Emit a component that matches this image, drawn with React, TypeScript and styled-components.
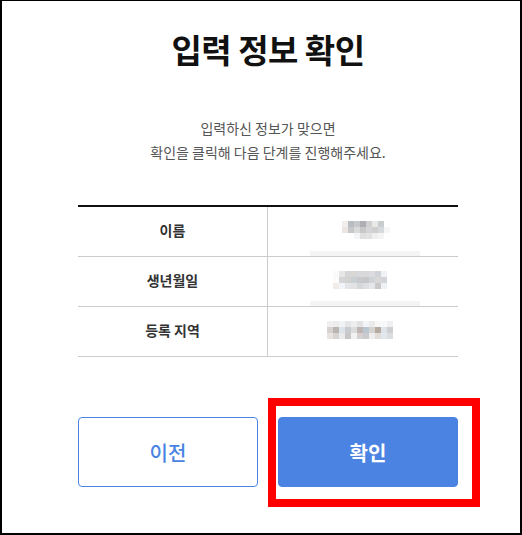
import { FunctionComponent } from "react";
import styled, { createGlobalStyle } from "styled-components";

const GlobalStyle = createGlobalStyle`
    html, body {
        margin: 0;
        padding: 0;
        background: #fff;
    }
    body {
        font-family: "Noto Sans CJK KR", "Noto Sans", sans-serif;
    }
`;

const Frame = styled.main`
    position: relative;
    box-sizing: border-box;
    width: 522px;
    height: 535px;
    padding-left: 14px;
    border: 2px solid #000;
    border-top-width: 1px;
    display: flex;
    flex-direction: column;
    align-items: center;
    background: #fff;
`;

const Title = styled.h1`
    margin: 25px 0 0;
    font-size: 33px;
    line-height: 46px;
    font-weight: 700;
    color: #111;
    letter-spacing: -0.5px;
`;

const Guide = styled.p`
    margin: 44px 0 0;
    font-size: 14px;
    line-height: 24px;
    color: #555;
    text-align: center;
`;

const Table = styled.div`
    margin-top: 41px;
    width: 380px;
    border-top: 2px solid #111;
`;

const Row = styled.div`
    display: grid;
    grid-template-columns: 190px 190px;
    height: 50px;
    border-bottom: 1px solid #ccc;
    box-sizing: border-box;
`;

const Label = styled.div`
    display: flex;
    align-items: center;
    justify-content: center;
    padding-bottom: 3px;
    font-size: 14px;
    font-weight: 700;
    color: #333;
    border-right: 1px solid #ccc;
`;

const Value = styled.div<{ $shade: boolean }>`
    position: relative;
    display: flex;
    align-items: center;
    justify-content: center;
    padding-bottom: 4px;

    &::after {
        content: "";
        display: ${(p) => (p.$shade ? "block" : "none")};
        position: absolute;
        left: 42px;
        right: 38px;
        bottom: 0;
        height: 5px;
        background: #f4f4f4;
    }
`;

const Mosaic = styled.div<{ $cols: number }>`
    display: grid;
    grid-template-columns: repeat(${(p) => p.$cols}, 6px);
    grid-auto-rows: 6px;
`;

const Cell = styled.span<{ $c: string }>`
    background: ${(p) => p.$c};
`;

const Buttons = styled.div`
    margin-top: 60px;
    display: flex;
    gap: 20px;
`;

const Button = styled.button<{ $primary?: boolean }>`
    width: 180px;
    height: 70px;
    box-sizing: border-box;
    border-radius: 4px;
    border: 1px solid #4a83e2;
    background: ${(p) => (p.$primary ? "#4a83e2" : "#fff")};
    color: ${(p) => (p.$primary ? "#fff" : "#4a83e2")};
    font-family: "Noto Sans CJK KR", "Noto Sans", sans-serif;
    font-size: 20px;
    font-weight: ${(p) => (p.$primary ? 700 : 500)};
    cursor: pointer;
`;

const Highlight = styled.div`
    position: absolute;
    left: 266px;
    top: 397px;
    width: 212px;
    height: 109px;
    box-sizing: border-box;
    border: 8px solid #ff0000;
    pointer-events: none;
`;

const mosaics: string[][] = [
    [
        "#fff", "#f1efee", "#b9bcc0", "#c6c8cb", "#aeaeb3", "#d0d0d0", "#e9e9e6", "#c8cdd0", "#fff",
        "#fff", "#ebe6e3", "#c5c7c9", "#dadada", "#c8c8c8", "#d5d5d8", "#cfcfcf", "#d7dadc", "#f6f6f6",
        "#fff", "#fff", "#fff", "#f3f5f6", "#e0dfe0", "#e2e2e3", "#efefef", "#f4f4f4", "#fff",
    ],
    [
        "#fafafa", "#e6e6e6", "#d6d6d8", "#d9d7d4", "#d8d8db", "#d8d8da", "#dcdcdf", "#cfd2d7", "#f0f2f5", "#fff",
        "#fbfbfb", "#d5d5d7", "#d2d2d0", "#c9d0d3", "#c8c9cc", "#c5c7c9", "#cfd2d6", "#d9d8d7", "#d3d3da", "#fff",
        "#f2ece9", "#f1f4f8", "#e4e5e7", "#e2e2e2", "#d6d7da", "#dfdfe1", "#e6e7ea", "#c9c9c9", "#eef1f6", "#fff",
    ],
    [
        "#f0eeee", "#ececec", "#f0f3f5", "#e6e6e6", "#eeeeee", "#e3e3e6", "#f2f5f8", "#ebebeb", "#f7f7f7", "#f6f8fa", "#f0f0f0", "#fff",
        "#d7d2cf", "#bbb5b1", "#dde3ea", "#c9cccf", "#dcdcdc", "#bfb6b3", "#bac7d0", "#d6d3d0", "#b6aba3", "#dfe3ea", "#cfcfd2", "#fff",
        "#e8e3e0", "#d4d4d4", "#ebebeb", "#c7c7c7", "#f2f2f2", "#d5d0cf", "#cbcbcf", "#eeeeee", "#e2ddd8", "#e2e7ef", "#dcdde0", "#fff",
    ],
];

const rows = [
    { label: "이름", shade: true },
    { label: "생년월일", shade: true },
    { label: "등록 지역", shade: false },
];

const App: FunctionComponent = () => {
    return (
        <>
            <GlobalStyle />
            <Frame>
                <Title>입력 정보 확인</Title>
                <Guide>
                    입력하신 정보가 맞으면
                    <br />
                    확인을 클릭해 다음 단계를 진행해주세요.
                </Guide>

                <Table>
                    {rows.map((row, i) => (
                        <Row key={row.label}>
                            <Label>{row.label}</Label>
                            <Value $shade={row.shade}>
                                <Mosaic $cols={mosaics[i].length / 3}>
                                    {mosaics[i].map((c, j) => (
                                        <Cell key={j} $c={c} />
                                    ))}
                                </Mosaic>
                            </Value>
                        </Row>
                    ))}
                </Table>

                <Buttons>
                    <Button type="button">이전</Button>
                    <Button type="button" $primary>확인</Button>
                </Buttons>

                <Highlight />
            </Frame>
        </>
    );
};

export default App;
